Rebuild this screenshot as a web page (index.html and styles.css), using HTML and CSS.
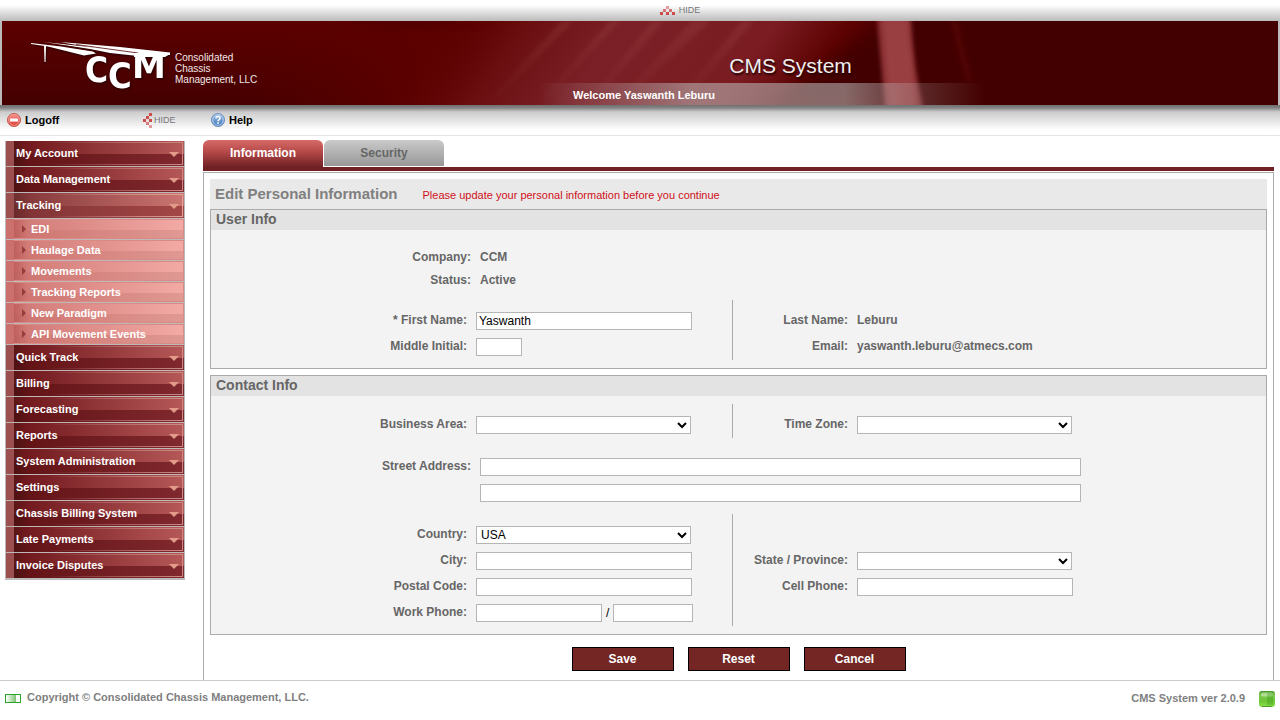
FILE: index.html
```html
<!DOCTYPE html>
<html lang="en">
<head>
<meta charset="utf-8">
<title>CMS System</title>
<link rel="stylesheet" href="styles.css">
</head>
<body>
<header>
  <div class="strip">
    <button class="hide" type="button">
      <svg width="15" height="9" viewBox="0 0 15 9" aria-hidden="true"><g fill="#cc4b4b"><path d="M0 6h3v3H0zM6 6h3v3H6zM12 6h3v3h-3z"/><path fill="#d27373" d="M3 3h3v3H3zM9 3h3v3H9z"/><path fill="#e09c9c" d="M6 0h3v3H6z"/></g></svg>
      HIDE
    </button>
  </div>
  <div class="banner-frame">
    <div class="banner">
      <svg class="banner-art" viewBox="0 0 1276 84" preserveAspectRatio="none" aria-hidden="true">
        <defs>
          <linearGradient id="shade" x1="0" y1="0" x2="0" y2="1"><stop offset="0" stop-color="#5c0000"/><stop offset="1" stop-color="#440000"/></linearGradient>
          <linearGradient id="mid" gradientUnits="userSpaceOnUse" x1="220" y1="0" x2="420" y2="0"><stop offset="0" stop-color="#5a0000" stop-opacity="0"/><stop offset="1" stop-color="#5c0000"/></linearGradient>
          <linearGradient id="glow" gradientUnits="userSpaceOnUse" x1="440" y1="0" x2="870" y2="0" gradientTransform="skewX(-35)">
            <stop offset="0" stop-color="#5c0000" stop-opacity="0"/><stop offset=".2" stop-color="#6a0e10"/><stop offset=".42" stop-color="#7a2026"/><stop offset=".78" stop-color="#7a1c22"/><stop offset=".95" stop-color="#5e0202"/><stop offset="1" stop-color="#560000"/>
          </linearGradient>
          <linearGradient id="ray" x1="0" y1="0" x2="0" y2="1"><stop offset="0" stop-color="#c07070" stop-opacity=".16"/><stop offset="1" stop-color="#c07070" stop-opacity="0"/></linearGradient>
          <filter id="soft" x="-30%" y="-30%" width="160%" height="160%"><feGaussianBlur stdDeviation="2"/></filter>
          <filter id="softer" x="-30%" y="-30%" width="160%" height="160%"><feGaussianBlur stdDeviation="9"/></filter>
        </defs>
        <rect width="1276" height="84" fill="url(#shade)"/>
        <rect x="220" width="700" height="84" fill="url(#mid)"/>
        <rect x="380" width="540" height="84" fill="url(#glow)"/>
        <path d="M320 -10h170l-80 16z" fill="#420000" opacity=".6" filter="url(#softer)"/>
        <path d="M880 0L770 84H1276V0z" fill="#430000" filter="url(#softer)"/>
        <rect x="880" width="396" height="84" fill="#430000"/>
        <g fill="url(#ray)" filter="url(#soft)"><path d="M560 0h12L490 84h-8zM608 0h10L540 84h-6zM650 0h12L590 84h-8zM690 0h18L620 84h-10zM740 0h12L680 84h-8z"/></g>
        <path d="M948 0h8l14 60h-6z" fill="#7a0808" opacity=".25" filter="url(#soft)"/>
        <path d="M875 -4h34q2 46 12 92h-38q-4-46-8-92z" fill="#8c3236" filter="url(#soft)"/>
        <path d="M881 -4h24l9 92h-26z" fill="#a2494c" opacity=".6" filter="url(#soft)"/>
      </svg>
      <div class="brand">
        <svg class="logo" width="144" height="56" viewBox="30 38 144 56" role="img" aria-label="CCM">
          <g fill="#fff">
            <path d="M31 43l30 3.500 32 5 3 2-12 2-36-9-17-2.500z"/>
            <path d="M44 46h2l-.5 16h-1z"/>
            <path d="M44 42l50 5.500 44 6v2.500l-28-3-20-4z"/>
            <path d="M60 42l60 5 50 5.500v2.500h-36z"/>
          </g>
          <path d="M76 44.500l62 8.500M66 46l34 6" stroke="#500000" stroke-width=".8"/>
          <text class="logo-c" x="85" y="82" font-size="35">C</text>
          <text class="logo-c" x="108" y="88" font-size="36">C</text>
          <text class="logo-m" x="132" y="78" font-size="34">M</text>
          <path d="M134 54h36l-5 3h-31z" fill="#fff"/>
        </svg>
        <span class="brand-name">Consolidated<br>Chassis<br>Management, LLC</span>
      </div>
      <h1 class="product">CMS System</h1>
      <p class="welcome">Welcome Yaswanth Leburu</p>
    </div>
  </div>
  <div class="toolbar">
    <a class="tool tool-logoff" href="#">
      <svg width="14" height="14" viewBox="0 0 14 14" aria-hidden="true"><defs><linearGradient id="red" x1="0" y1="0" x2="0" y2="1"><stop offset="0" stop-color="#f7938a"/><stop offset="1" stop-color="#d93a32"/></linearGradient></defs><circle cx="7" cy="7" r="6.5" fill="url(#red)" stroke="#c4554e"/><circle cx="7" cy="7" r="5.4" fill="none" stroke="#f5a29b" stroke-width=".8"/><rect x="3" y="5.5" width="8" height="3" rx=".6" fill="#fff"/></svg>
      Logoff
    </a>
    <button class="hide hide-side" type="button">
      <svg width="9" height="15" viewBox="0 0 9 15" aria-hidden="true"><path fill="#cc4b4b" d="M6 0h3v3H6zM6 6h3v3H6zM0 6h3v3H0zM3 3h3v3H3z"/><path fill="#d77d7d" d="M3 9h3v3H3z"/><path fill="#e09c9c" d="M6 12h3v3H6z"/></svg>
      HIDE
    </button>
    <a class="tool" href="#">
      <svg width="14" height="14" viewBox="0 0 14 14" aria-hidden="true"><defs><linearGradient id="blue" x1="0" y1="0" x2="0" y2="1"><stop offset="0" stop-color="#9dbfe6"/><stop offset="1" stop-color="#3f77bb"/></linearGradient></defs><circle cx="7" cy="7" r="6.5" fill="url(#blue)" stroke="#6b8fbf"/><circle cx="7" cy="7" r="5.3" fill="none" stroke="#c5daf1" stroke-width=".8"/><path d="M5 5.6q0-2 2-2t2 1.7q0 1-1.2 1.7Q7 7.400 7 8.200" fill="none" stroke="#fff" stroke-width="1.500"/><rect x="6.200" y="9.200" width="1.600" height="1.600" fill="#fff"/></svg>
      Help
    </a>
  </div>
</header>

<div class="body">
  <nav class="side" aria-label="Main">
    <ul class="menu">
      <li><button class="group" type="button">My Account</button></li>
      <li><button class="group" type="button">Data Management</button></li>
      <li><button class="group open" type="button" aria-expanded="true">Tracking</button>
        <ul class="submenu">
          <li><a href="#">EDI</a></li>
          <li><a href="#">Haulage Data</a></li>
          <li><a href="#">Movements</a></li>
          <li><a href="#">Tracking Reports</a></li>
          <li><a href="#">New Paradigm</a></li>
          <li><a href="#">API Movement Events</a></li>
        </ul>
      </li>
      <li><button class="group" type="button">Quick Track</button></li>
      <li><button class="group" type="button">Billing</button></li>
      <li><button class="group" type="button">Forecasting</button></li>
      <li><button class="group" type="button">Reports</button></li>
      <li><button class="group" type="button">System Administration</button></li>
      <li><button class="group" type="button">Settings</button></li>
      <li><button class="group" type="button">Chassis Billing System</button></li>
      <li><button class="group" type="button">Late Payments</button></li>
      <li><button class="group" type="button">Invoice Disputes</button></li>
    </ul>
  </nav>

  <main class="main">
    <div class="tabs">
      <a class="tab active" href="#" aria-current="page">Information</a>
      <a class="tab" href="#">Security</a>
    </div>
    <form class="sheet">
      <div class="heading">
        <h2>Edit Personal Information</h2>
        <p>Please update your personal information before you continue</p>
      </div>

      <section class="panel">
        <h3>User Info</h3>
        <div class="rows facts">
          <div class="row wide"><span class="label">Company:</span><span>CCM</span></div>
          <div class="row wide"><span class="label">Status:</span><span>Active</span></div>
        </div>
        <div class="split names">
          <div class="half">
            <div class="row"><label class="label" for="first">* First Name:</label><input class="field" id="first" type="text" value="Yaswanth"></div>
            <div class="row"><label class="label" for="middle">Middle Initial:</label><input class="field initial" id="middle" type="text"></div>
          </div>
          <div class="half right">
            <div class="row"><span class="label">Last Name:</span><span>Leburu</span></div>
            <div class="row"><span class="label">Email:</span><span>yaswanth.leburu@atmecs.com</span></div>
          </div>
        </div>
      </section>

      <section class="panel contact">
        <h3>Contact Info</h3>
        <div class="split area">
          <div class="half">
            <div class="row"><label class="label" for="area">Business Area:</label><select class="field pick" id="area"><option></option></select></div>
          </div>
          <div class="half right">
            <div class="row"><label class="label" for="zone">Time Zone:</label><select class="field pick" id="zone"><option></option></select></div>
          </div>
        </div>
        <div class="rows street">
          <div class="row wide"><label class="label" for="street1">Street Address:</label><input class="field long" id="street1" type="text"></div>
          <div class="row wide"><span class="label"></span><input class="field long" id="street2" type="text" aria-label="Street Address line 2"></div>
        </div>
        <div class="split place">
          <div class="half">
            <div class="row"><label class="label" for="country">Country:</label><select class="field pick" id="country"><option>USA</option></select></div>
            <div class="row"><label class="label" for="city">City:</label><input class="field" id="city" type="text"></div>
            <div class="row"><label class="label" for="postal">Postal Code:</label><input class="field" id="postal" type="text"></div>
            <div class="row"><label class="label" for="phone">Work Phone:</label><div class="phone"><input class="field number" id="phone" type="text"><span>/</span><input class="field extension" type="text" aria-label="Extension"></div></div>
          </div>
          <div class="half right">
            <div class="row"></div>
            <div class="row"><label class="label" for="state">State / Province:</label><select class="field pick" id="state"><option></option></select></div>
            <div class="row"><label class="label" for="cell">Cell Phone:</label><input class="field" id="cell" type="text"></div>
          </div>
        </div>
      </section>

      <div class="actions">
        <button type="submit">Save</button>
        <button type="reset">Reset</button>
        <button type="button">Cancel</button>
      </div>
    </form>
  </main>
</div>

<footer>
  <svg width="16" height="9" viewBox="0 0 16 9" aria-hidden="true"><defs><linearGradient id="bar"><stop offset="0" stop-color="#f4fbf2"/><stop offset="1" stop-color="#7cc374"/></linearGradient></defs><rect x=".5" y=".5" width="15" height="8" fill="#fff" stroke="#2aa52a"/><rect x="2" y="1" width="9" height="7" fill="url(#bar)"/></svg>
  <span class="copyright">Copyright © Consolidated Chassis Management, LLC.</span>
  <span class="version">CMS System ver 2.0.9</span>
  <svg width="16" height="16" viewBox="0 0 16 16" aria-hidden="true"><defs><linearGradient id="green" x1="0" y1="0" x2="0" y2="1"><stop offset="0" stop-color="#3f9420"/><stop offset=".25" stop-color="#7fcb50"/><stop offset=".6" stop-color="#6cc436"/><stop offset="1" stop-color="#8be04e"/></linearGradient></defs><rect width="16" height="16" rx="3" fill="url(#green)"/><rect x="2" y="1.500" width="12" height="4" rx="2" fill="#d5f0c4" opacity=".6"/><path d="M8 2h6v12H8z" fill="#2f9010" opacity=".3"/><path d="M3 15.500h10" stroke="#4c9a25"/></svg>
</footer>
</body>
</html>
```

FILE: styles.css
```css
* { box-sizing: border-box; }

body {
  margin: 0;
  min-height: 100vh;
  display: flex;
  flex-direction: column;
  background: #fff;
  font: bold 11px/13px "Liberation Sans", Arial, sans-serif;
  color: #666;
}

h1, h2, h3, p, ul { margin: 0; padding: 0; }
ul { list-style: none; }
a { color: inherit; text-decoration: none; }
button { font: inherit; border: 0; padding: 0; cursor: pointer; }
svg { display: block; flex: none; }

/* Header */
.strip {
  height: 21px;
  display: flex;
  justify-content: center;
  align-items: center;
  padding-left: 80px;
  background: linear-gradient(#fff 5px, #bbb);
}
.hide {
  display: flex;
  align-items: center;
  gap: 4px;
  background: none;
  font: 9px/11px "Liberation Sans", Arial, sans-serif;
  color: #777;
}
.hide-side { gap: 2px; }

.banner-frame { padding: 0 2px; background: #bbb; }
.banner {
  position: relative;
  display: grid;
  grid-template-columns: 57% 1fr;
  grid-template-rows: 62px 22px;
  overflow: hidden;
}
.banner-art { position: absolute; inset: 0; width: 100%; height: 100%; }
.brand {
  position: relative;
  grid-area: 1 / 1 / 3 / 2;
  display: flex;
  align-items: flex-start;
  padding: 17px 0 0 28px;
}
.logo { overflow: visible; filter: drop-shadow(1px 1px 1px #200000); }
.logo-c { font-family: "DejaVu Sans Condensed", "Liberation Sans", sans-serif; font-weight: bold; fill: #fff; }
.logo-m { font-family: "DejaVu Sans", sans-serif; font-weight: bold; fill: #fff; }
.brand-name {
  padding: 14px 0 0 1px;
  font: 10px/11px "Liberation Sans", Arial, sans-serif;
  color: #f0e8e8;
}
.product {
  position: relative;
  grid-area: 1 / 2;
  padding-top: 32px;
  font: 21px/26px "Liberation Sans", Arial, sans-serif;
  color: #eee;
  text-shadow: 1px 2px 2px #200000;
}
.welcome {
  position: relative;
  grid-area: 2 / 1 / 3 / 3;
  padding: 0 0 0 8px;
  line-height: 24px;
  text-align: center;
  color: #fff;
  background: linear-gradient(to right, transparent 42%, rgba(190, 190, 190, .55) 54%, rgba(190, 190, 190, .55) 66%, rgba(190, 190, 190, .25) 71%, transparent 77%);
}

.toolbar {
  height: 31px;
  display: flex;
  align-items: center;
  padding-left: 7px;
  border-bottom: 1px solid #e6e6e6;
  background: linear-gradient(#6f6f6f, #868686 3px, #bbb 6px, #ccc 7px, #fff 25px);
  color: #000;
}
.tool { display: flex; align-items: center; gap: 4px; }
.tool-logoff { width: 136px; }
.hide-side { width: 68px; }

/* Body */
.body { flex: 1; display: flex; }
.side { flex: none; width: 180px; margin: 5px 18px 0 5px; }

.menu { border: 1px solid #bbb; border-top: 0; border-bottom-width: 2px; color: #fff; }
.menu > li + li, .submenu li { border-top: 1px solid #c0b8b8; }
.group {
  position: relative;
  display: block;
  width: 100%;
  height: 25px;
  padding-left: 10px;
  text-align: left;
  color: #fff;
  background:
    linear-gradient(to right, #9b4f4f, #9b4f4f) 0 0 / 8px 100% no-repeat,
    linear-gradient(to right, #5c181800 20%, #c88a84) 8px 1px / 168px 1px no-repeat,
    linear-gradient(to right, #5c181800 20%, #c88a84) 8px 23px / 168px 1px no-repeat,
    linear-gradient(#c88a84, #c88a84) right 1px top 1px / 1px 23px no-repeat,
    linear-gradient(to right, #5a1616 8px, #71191e 20px, #b65858) 0 0 / 100% 13px no-repeat,
    linear-gradient(to right, #4c1212 8px, #641417 24px, #80292e);
}
.group.open {
  background:
    linear-gradient(to right, #9b4f4f, #9b4f4f) 0 0 / 8px 100% no-repeat,
    linear-gradient(to right, #5c181800 20%, #dda39a) 8px 1px / 168px 1px no-repeat,
    linear-gradient(to right, #5c181800 20%, #dda39a) 8px 23px / 168px 1px no-repeat,
    linear-gradient(#dda39a, #dda39a) right 1px top 1px / 1px 23px no-repeat,
    linear-gradient(to right, #6e2e2e 8px, #8a3c3e 28px, #cb7571) 0 0 / 100% 13px no-repeat,
    linear-gradient(to right, #6a2a2a 8px, #843537 28px, #a34646);
}
.group::after {
  content: "";
  position: absolute;
  right: 5px;
  top: 11px;
  border: 5px solid transparent;
  border-top-color: #e29b88;
  border-bottom: 0;
}
.submenu a {
  display: flex;
  align-items: center;
  height: 20px;
  padding-left: 16px;
  background:
    linear-gradient(to right, #cb706d, #cb706d) 0 0 / 8px 100% no-repeat,
    linear-gradient(#d98a84, #d98a84) right top / 1px 100% no-repeat,
    linear-gradient(#d98a84, #d98a84) 8px 0 / 100% 1px no-repeat,
    linear-gradient(#d98a84, #d98a84) 8px 19px / 100% 1px no-repeat,
    linear-gradient(to right, #c0605e 8px, #d27c78 22px, #f3aaa5) 0 0 / 100% 11px no-repeat,
    linear-gradient(to right, #bd5f5d 8px, #cf7672 22px, #e09993);
}
.submenu a::before {
  content: "";
  margin-right: 5px;
  border: 4px solid transparent;
  border-left-color: #953c3c;
  border-right: 0;
}

/* Content */
.main { flex: 1; display: flex; flex-direction: column; min-width: 0; padding: 4px 6px 0 0; }
.tabs { display: flex; align-items: flex-start; gap: 1px; border-bottom: 4px solid #6e2022; }
.tab {
  width: 120px;
  height: 26px;
  margin-bottom: 1px;
  border-radius: 6px 6px 0 0;
  font-size: 12px;
  line-height: 26px;
  text-align: center;
  color: #666;
  background: linear-gradient(#cacaca, #979797);
}
.tab.active {
  height: 27px;
  margin-bottom: 0;
  color: #fff;
  background: linear-gradient(#d56c69, #b94b4b 40%, #702123);
}
.sheet {
  flex: 1;
  margin-top: 1px;
  padding: 6px 6px 9px;
  border: 1px solid #aaa;
  border-bottom: 0;
}
.heading {
  display: flex;
  align-items: center;
  gap: 25px;
  height: 30px;
  padding-left: 5px;
  background: #e9e9e9;
}
.heading h2 { font-size: 15px; line-height: 18px; color: #808080; }
.heading p { padding-top: 3px; font-weight: normal; color: #d01020; }

.panel { border: 1px solid #aaa; background: #f3f3f3; font-size: 12px; line-height: 14px; padding-bottom: 8px; }
.panel h3 { height: 20px; padding-left: 5px; font-size: 14px; line-height: 18px; background: #e3e3e3; color: #666; }
.contact { margin-top: 6px; }

.row { display: flex; align-items: center; gap: 9px; height: 26px; }
.label { width: 256px; flex: none; padding-bottom: 2px; text-align: right; }
.row > span { padding-bottom: 2px; }
.wide .label { width: 260px; }
.right .label { width: 115px; }

.facts { padding: 15px 0 9px; }
.facts .row { height: 23px; }
.facts .row > span { padding-bottom: 0; }
.split { display: grid; grid-template-columns: 521px 1fr; }
.right { border-left: 1px solid #aaa; }
.names .half { padding-top: 8px; }
.area { padding: 8px 0 16px; }
.area .half { padding-top: 8px; }
.street { padding-bottom: 8px; }
.place .half { padding: 8px 0 0; }

.field {
  width: 216px;
  height: 18px;
  padding: 0 2px;
  border: 1px solid #b5b5b5;
  border-radius: 0;
  background: #fff;
  font: 12px/14px "Liberation Sans", Arial, sans-serif;
  color: #000;
}
.pick { width: 215px; padding: 0; }
.initial { width: 46px; }
.long { width: 601px; }
.phone { display: flex; align-items: center; gap: 4px; font-weight: normal; color: #000; }
.number { width: 126px; }
.extension { width: 80px; }

.actions { display: flex; justify-content: center; gap: 14px; padding-top: 12px; }
.actions button {
  width: 102px;
  height: 24px;
  border: 1px solid #000;
  background: #732623;
  color: #fff;
  font-size: 12px;
}

footer {
  display: flex;
  align-items: center;
  gap: 6px;
  height: 40px;
  padding: 0 5px 4px;
  border-top: 1px solid #ccc;
  color: #808080;
}
.copyright { padding-bottom: 2px; }
.version { margin-left: auto; padding-right: 8px; }
```
